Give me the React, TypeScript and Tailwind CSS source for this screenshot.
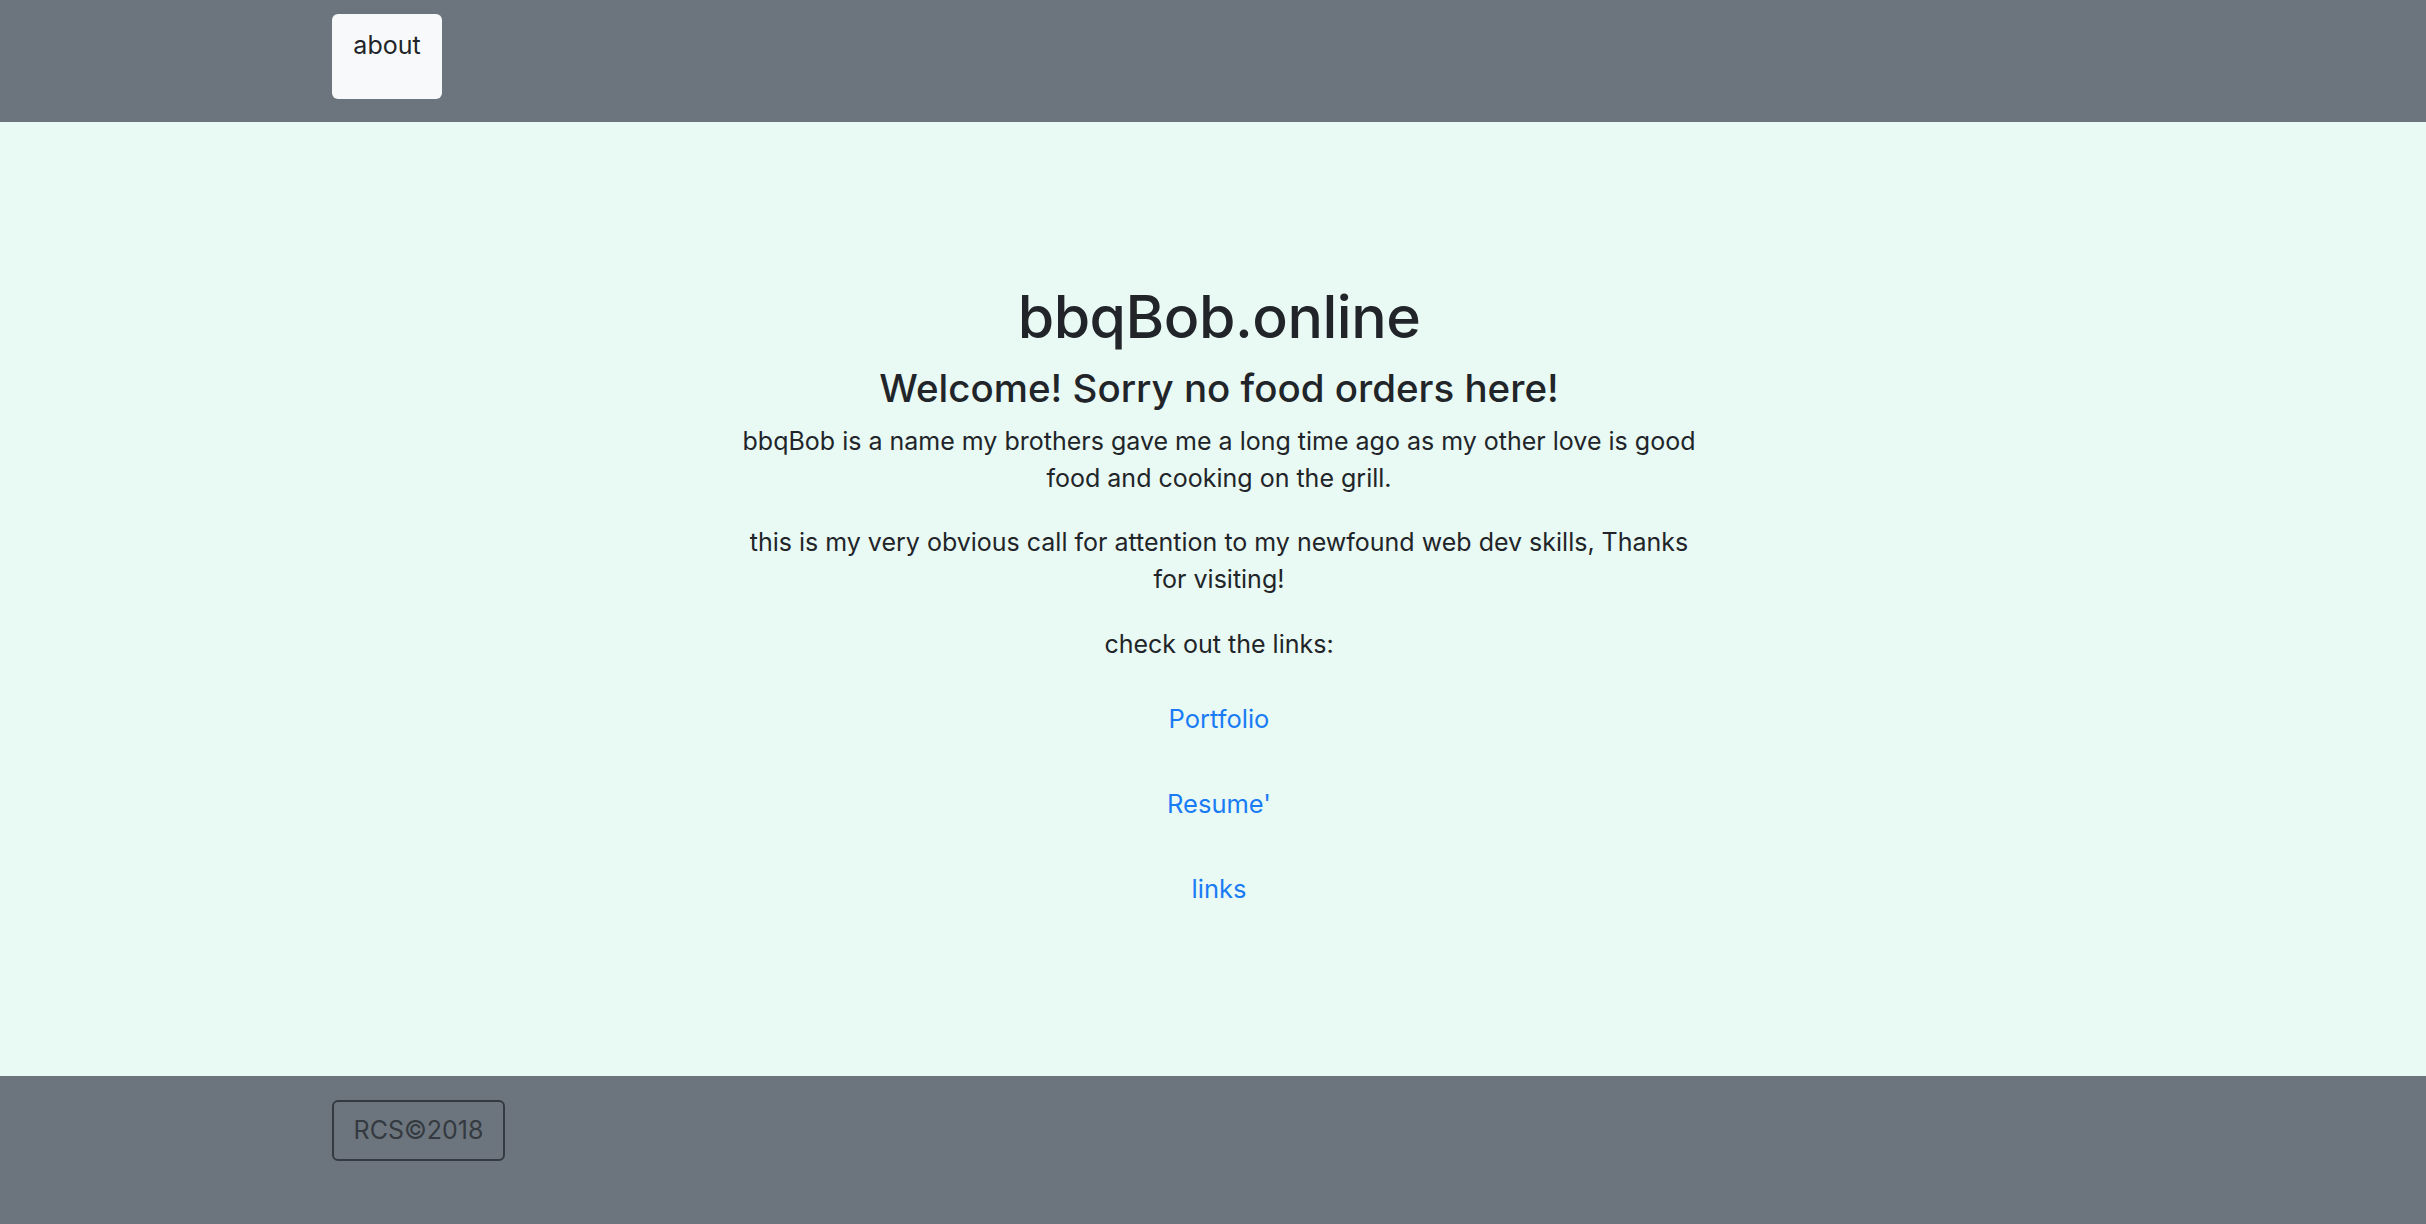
import React from "react";

export default function App() {
  const font = { fontFamily: "Inter, 'Noto Sans', 'Liberation Sans', sans-serif" };
  return (
    <div className="w-[2426px] h-[1224px] flex flex-col text-[#212529]" style={font}>
      <header className="h-[122px] bg-[#6c757d] pl-[332px] pt-[14px]">
        <button className="h-[85px] w-[110px] bg-[#f8f9fa] rounded-[6px] text-[25px] leading-[36px] pt-[13px] flex justify-center items-start text-[#212529]">
          about
        </button>
      </header>
      <main className="h-[954px] bg-[#e9f9f3] flex flex-col items-center pt-[159px] pl-[12px]">
        <h1 className="text-[59px] leading-[72px] font-medium tracking-[-0.5px]">bbqBob.online</h1>
        <h2 className="mt-[13px] text-[38.5px] leading-[44px] font-medium">Welcome! Sorry no food orders here!</h2>
        <div className="w-[972px] text-center text-[25px] leading-[37px] mt-[13px]">
          <p>bbqBob is a name my brothers gave me a long time ago as my other love is good food and cooking on the grill.</p>
          <p className="mt-[27px]">this is my very obvious call for attention to my newfound web dev skills, Thanks for visiting!</p>
          <p className="mt-[28px]">check out the links:</p>
        </div>
        <div className="mt-[38px] flex flex-col items-center text-[25.5px] leading-[36px] text-[#1a7cf5] gap-[49px]">
          <a>Portfolio</a>
          <a>Resume'</a>
          <a>links</a>
        </div>
      </main>
      <footer className="flex-1 bg-[#6c757d] pl-[332px] pt-[24px]">
        <div className="h-[61px] w-[173px] border-2 border-[#343a40] rounded-[6px] text-[25px] text-[#343a40] flex items-center justify-center">
          RCS©2018
        </div>
      </footer>
    </div>
  );
}
